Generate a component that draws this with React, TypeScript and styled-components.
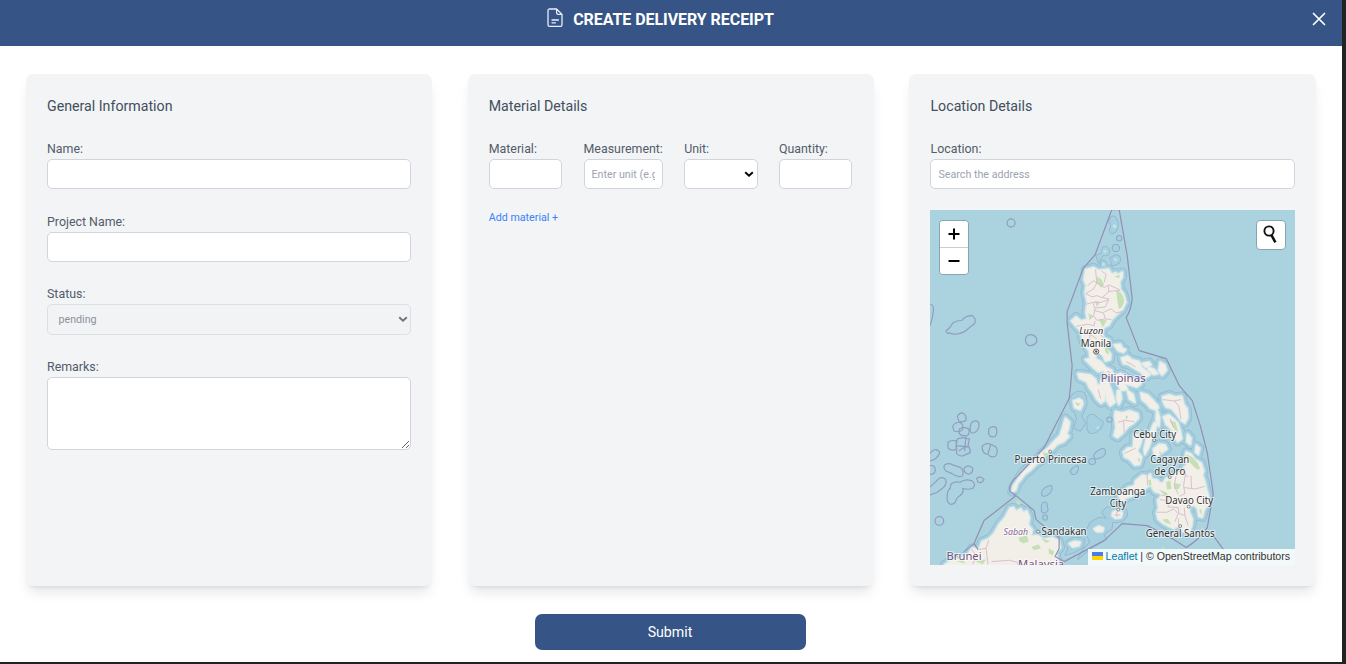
import React from "react";
import styled, { createGlobalStyle } from "styled-components";

const GlobalStyle = createGlobalStyle`
  * { box-sizing: border-box; }
  body { margin: 0; background: #232323; font-family: Roboto, "Liberation Sans", sans-serif; }
  input, textarea, select, button { font-family: inherit; }
`;

const Dialog = styled.div`
  width: 1342px;
  height: 662px;
  background: #fff;
  display: flex;
  flex-direction: column;
  overflow: hidden;
`;

const Header = styled.header`
  height: 46px;
  flex: none;
  display: flex;
  align-items: flex-start;
  justify-content: space-between;
  padding: 8px 15px 0 10px;
  background: #365486;
  color: #fff;
`;

const HeaderSide = styled.div`
  width: 0;
`;

const Title = styled.h1`
  margin: 0;
  display: flex;
  align-items: center;
  gap: 10px;
  height: 22px;
  font-size: 16px;
  font-weight: 700;
  letter-spacing: -0.06px;
  svg { position: relative; top: -1px; }
`;

const CloseButton = styled.button`
  width: 16px;
  height: 22px;
  padding: 0;
  border: 0;
  background: none;
  color: #fff;
  display: flex;
  align-items: center;
  justify-content: center;
`;

const Panels = styled.main`
  display: grid;
  grid-template-columns: repeat(3, 1fr);
  column-gap: 35.4px;
  padding: 28px 26.2px 0 26px;
  height: 540px;
`;

const Panel = styled.section`
  background: #f2f4f6;
  border-radius: 7px;
  padding: 21px;
  box-shadow: 0 9px 13px -3px rgba(0, 0, 0, 0.1), 0 4px 5px -4px rgba(0, 0, 0, 0.12);
  display: flex;
  flex-direction: column;
  min-width: 0;
`;

const PanelTitle = styled.h2`
  margin: 0 0 23px;
  font-size: 14.2px;
  line-height: 22px;
  font-weight: 400;
  color: #434e5c;
`;

const Field = styled.div<{ $gap?: number }>`
  display: flex;
  flex-direction: column;
  min-width: 0;
  margin-bottom: ${(p) => p.$gap ?? 23.2}px;
`;

const Label = styled.label`
  font-size: 12.4px;
  line-height: 18px;
  height: 19px;
  color: #535c6a;
  white-space: nowrap;
`;

const Input = styled.input`
  width: 100%;
  height: 30.4px;
  border: 1px solid #d1d5db;
  border-radius: 5px;
  background: #fff;
  padding: 0 7px;
  font-size: 10.7px;
  color: #374151;
  &::placeholder { color: #9ca3af; }
`;

const TextArea = styled.textarea`
  display: block;
  width: 100%;
  height: 73px;
  border: 1px solid #d1d5db;
  border-radius: 5px;
  background: #fff;
  padding: 7px;
  font-size: 10.7px;
`;

const SelectBox = styled.div<{ $muted?: boolean }>`
  height: 30.4px;
  border: 1px solid ${(p) => (p.$muted ? "#dcdfe3" : "#d1d5db")};
  border-radius: 5px;
  background: ${(p) => (p.$muted ? "#f2f3f5" : "#fff")};
  color: ${(p) => (p.$muted ? "#70747a" : "#000")};
  display: flex;
  align-items: center;
  justify-content: space-between;
  padding: 0 2.5px 0 10.5px;
  font-size: 10.7px;
`;

const SelectValue = styled.span`
  color: #8b919a;
`;

const MaterialRow = styled.div`
  display: grid;
  grid-template-columns: 73.5px 79.3px 73.5px 73.5px;
  column-gap: 21.3px;
`;

const AddLink = styled.a`
  font-size: 10.7px;
  line-height: 16px;
  color: #3b82f6;
`;

const MapFrame = styled.div`
  position: relative;
  height: 354.6px;
  flex: none;
  overflow: hidden;
  background: #aad3df;
`;

const MapDrawing = styled.svg`
  display: block;
  width: 100%;
  height: 100%;
`;

const ZoomControl = styled.div`
  position: absolute;
  left: 9px;
  top: 9.4px;
  width: 30px;
  border: 1.5px solid #87a5ae;
  border-radius: 4px;
  overflow: hidden;
`;

const ZoomButton = styled.div`
  height: 26.7px;
  background: #fff;
  display: flex;
  align-items: center;
  justify-content: center;
  & + & { border-top: 1px solid #ccc; }
`;

const SearchControl = styled.div`
  position: absolute;
  right: 9px;
  top: 9.4px;
  width: 30px;
  height: 30px;
  border: 1.5px solid #87a5ae;
  border-radius: 4px;
  background: #fff;
  display: flex;
  align-items: center;
  justify-content: center;
`;

const Attribution = styled.div`
  position: absolute;
  right: 0;
  bottom: 0;
  width: 207px;
  height: 16px;
  background: rgba(255, 255, 255, 0.85);
  display: flex;
  align-items: center;
  gap: 2.8px;
  padding: 0 0 1px 4px;
  font: 10.64px/15px "Liberation Sans", Arial, sans-serif;
  color: #333;
  white-space: nowrap;
  a { color: #0078a8; }
`;

const Footer = styled.footer`
  display: flex;
  justify-content: center;
  padding: 28px 2px 0 0;
`;

const SubmitButton = styled.button`
  width: 271px;
  height: 36px;
  border: 0;
  border-radius: 7px;
  background: #365486;
  color: #fff;
  font-size: 14.2px;
  padding-bottom: 2px;
`;

/* Geometry is kept per map tile; each tile has its own origin and is drawn at a third of its size. */
type Shape = { o: [number, number]; d: string };
const N: [number, number] = [1040, 206];
const W: [number, number] = [926, 386];
const C: [number, number] = [1040, 386];
const E: [number, number] = [1110, 386];

const land: Shape[] = [
  { o: N, d: "M137 192L160 186L175 195L205 191L214 206L228 202L230 210L246 200L246 214L238 228L240 252L250 265L257 290L246 312L226 330L214 342L206 358L190 366L186 384L190 396L206 404L196 426L212 446L210 462L196 466L188 448L170 438L164 460L150 456L148 436L134 418L126 396L122 376L108 362L94 346L108 334L122 346L142 342L138 320L142 290L135 262L139 240L132 222Z" },
  { o: N, d: "M136 462L160 456L184 470L196 486L214 494L218 505L196 502L190 494L174 498L160 486Z" },
  { o: N, d: "M244 458L262 452L274 462L296 468L304 486L318 496L330 506L318 514L300 498L280 486L264 476L250 474Z" },
  { o: N, d: "M360 470L374 478L378 494L366 508L356 496Z" },
  { o: N, d: "M114 504L150 508L166 522L176 560L164 566L148 546L140 528L118 518Z" },
  { o: N, d: "M222 418L240 416L246 428L256 432L250 440L234 434Z" },
  { o: N, d: "M186 518L204 530L214 556L224 590L210 600L200 586L196 556L180 540Z" },
  { o: N, d: "M226 510L242 504L262 520L284 524L302 534L290 544L272 538L252 534L262 552L244 554L232 536Z" },
  { o: N, d: "M262 556L278 566L284 590L268 580Z" },
  { o: N, d: "M306 474L326 470L332 478L316 484ZM322 484L342 492L352 504L340 506L326 494Z" },
  { o: C, d: "M158 -2L190 0L196 20L192 46L182 52L170 40L160 22Z" },
  { o: C, d: "M104 46L116 40L126 46L122 60L108 64Z" },
  { o: C, d: "M232 16L240 14L243 40L236 56L230 40Z" },
  { o: C, d: "M224 92L226 78L246 82L268 76L292 84L294 98L280 112L262 124L250 140L232 156L222 150L228 126Z" },
  { o: C, d: "M304 24L318 30L334 44L352 60L346 72L330 66L316 48Z" },
  { o: C, d: "M282 148L300 146L304 162L298 182L290 196L304 214L298 236L284 238L268 220L254 214L250 200L262 188L280 186Z" },
  { o: C, d: "M350 114L344 136L334 158L326 184L314 206L312 190L318 164L332 136L342 112Z" },
  { o: C, d: "M340 190L358 176L374 178L380 190L366 200L352 210L342 202Z" },
  { o: C, d: "M350 72L358 96L356 122L348 106Z" },
  { o: E, d: "M92 22L112 28L128 44L144 66L136 72L112 54L96 42Z" },
  { o: E, d: "M158 34L176 28L196 34L214 32L220 56L230 70L232 96L224 112L214 106L198 84L184 68L168 64L160 50Z" },
  { o: E, d: "M160 94L176 88L190 100L202 112L210 136L214 160L202 168L192 152L186 132L168 116Z" },
  { o: E, d: "M232 146L242 158L240 176L230 168Z" },
  { o: E, d: "M258 180L268 188L264 206L256 200Z" },
  { o: C, d: "M236 330L250 318L264 306L284 300L286 286L306 270L322 272L330 266L334 280L352 284L358 294L344 302L326 300L308 314L284 318L274 332L258 336L246 348Z" },
  { o: C, d: "M218 380L232 374L246 382L242 396L226 398L216 390Z" },
  { o: E, d: "M126 306L140 290L158 294L168 278L184 274L198 262L218 262L222 244L232 236L226 214L228 200L242 206L254 222L272 232L280 256L276 268L284 290L288 310L294 330L292 356L282 372L276 394L266 392L262 368L252 358L238 362L236 378L246 400L244 420L236 438L220 438L206 420L190 428L172 420L158 412L144 400L140 382L146 366L142 344L154 332L150 322L134 318Z" },
  { o: W, d: "M418 98L430 110L426 132L420 144L428 152L412 168L392 176L376 194L356 208L350 222L330 236L312 254L296 266L284 282L274 294L268 314L258 318L262 302L274 284L290 260L310 242L330 224L346 204L366 188L386 166L402 150L410 126Z" },
  { o: W, d: "M442 46L456 42L470 54L462 72L446 66Z" },
  { o: W, d: "M56 538L76 524L98 522L126 508L138 488L160 490L168 468L188 460L204 444L220 416L236 398L252 368L262 366L270 378L284 370L292 382L302 376L310 396L306 418L318 432L314 452L334 450L354 462L378 456L398 466L402 486L390 500L392 520L404 540Z" },
  { o: W, d: "M430 474L444 468L462 470L458 480L440 484Z" },
  { o: W, d: "M504 430L518 422L532 428L528 438L512 438Z" },
];

const shoals: Shape[] = [
  { o: N, d: "M212 36Q224 26 230 44Q240 58 226 78Q210 90 208 74Q218 58 206 48Z" },
  { o: N, d: "M188 126Q206 120 208 138Q206 154 190 148L180 162L176 172L168 150L184 144Z" },
  { o: N, d: "M210 158L226 148Q242 150 240 166Q230 180 216 178Z" },
  { o: N, d: "M182 168Q194 160 200 176Q196 190 182 184Z" },
  { o: W, d: "M434 34Q452 10 474 22Q488 44 474 74L466 92L478 112L462 136L444 128L452 100Z" },
  { o: W, d: "M484 96Q498 78 512 96L530 108Q530 128 512 138Q492 150 484 132Z" },
  { o: W, d: "M456 520L472 490L492 470L478 440L494 410L520 396L560 404L556 430L530 446L540 460L498 484Z" },
  { o: W, d: "M418 508L434 470Q450 450 476 462L466 486L444 500Z" },
  { o: C, d: "M186 380L200 366L230 364L258 372L262 390L246 404L218 410L198 398Z" },
];

const islets: Shape[] = [
  { o: N, d: "M218 62a5 5 0 1 0 10 0a5 5 0 1 0 -10 0M190 138a4 4 0 1 0 8 0a4 4 0 1 0 -8 0M222 162a4 4 0 1 0 8 0a4 4 0 1 0 -8 0M186 176a4 4 0 1 0 8 0a4 4 0 1 0 -8 0" },
  { o: C, d: "M170 126a3 3 0 1 0 6 0a3 3 0 1 0 -6 0M262 34a8 8 0 1 0 16 0a8 8 0 1 0 -16 0" },
];

const blobs: Shape[] = [
  { o: [926, 206], d: "M60 376Q74 366 80 352Q94 344 108 344Q118 330 138 330Q152 340 146 354L128 368Q114 382 98 384Q82 388 72 382Q62 386 60 376Z" },
  { o: [926, 206], d: "M12 296Q24 296 22 316Q20 340 12 360" },
  { o: [926, 206], d: "M243 52A12 12 0 1 0 267 52A12 12 0 1 0 243 52M300 394Q306 384 318 388Q334 392 332 408Q324 422 308 420Q294 412 300 394Z" },
  { o: W, d: "M94 94Q98 82 110 82Q122 88 120 104Q110 112 98 106ZM80 122Q86 110 100 110Q114 116 110 132Q98 142 84 136ZM136 112Q144 102 156 108Q162 118 156 130Q148 144 136 142Q128 130 136 112ZM100 130Q114 122 128 130Q132 144 124 150Q106 152 100 144ZM66 170Q74 162 90 166L92 190Q78 198 66 188ZM94 160L110 156L130 160L126 180Q134 190 132 202L116 208Q104 216 92 204L90 180ZM104 150L120 150L116 196M92 180L128 184M98 196L120 182" },
  { o: W, d: "M188 130Q198 118 210 126Q216 140 208 152Q194 158 188 146ZM168 182Q178 170 194 176L210 184Q218 200 208 212Q194 218 186 206Q168 206 168 182ZM194 178L186 204" },
  { o: W, d: "M12 204Q26 184 40 198Q42 210 24 222L12 226M12 240Q28 238 28 254Q26 268 12 266M56 238Q68 230 80 238L104 246Q116 258 108 272Q92 276 78 264L60 256Q50 248 56 238ZM114 248Q126 234 140 248Q142 262 128 266Q112 262 114 248ZM152 278Q164 270 174 282Q168 294 156 290ZM12 304Q22 296 32 286Q42 270 58 280Q64 292 54 304L34 320L12 328M66 316Q76 306 74 296Q86 286 102 290Q118 278 138 286Q152 296 140 308Q126 314 110 308Q114 322 102 330Q90 338 88 350Q72 364 64 346Q62 328 66 316ZM27 406A13 13 0 1 0 53 406A13 13 0 1 0 27 406" },
];

const banks: Shape[] = [
  { o: W, d: "M348 314Q362 300 376 300Q382 312 370 324Q356 338 346 328ZM346 358Q352 344 362 352L366 374Q358 388 346 378ZM432 258Q440 242 454 240Q462 250 450 264Q436 272 432 258ZM502 210Q510 194 530 188Q544 194 534 210Q518 222 506 220ZM488 228A10 9 0 1 0 508 228A10 9 0 1 0 488 228M350 396A6 7 0 1 0 364 396A6 7 0 1 0 350 396M542 102A8 8 0 1 0 558 102A8 8 0 1 0 542 102" },
  { o: N, d: "M229 98A8 8 0 1 0 245 98A8 8 0 1 0 229 98M216 127A11 11 0 1 0 238 127A11 11 0 1 0 216 127" },
];

const parks: Shape[] = [
  { o: N, d: "M228 254Q248 258 252 284Q250 304 236 310L232 290ZM170 212L184 222L192 238L182 246L172 232ZM222 212L240 208L236 218ZM164 286L180 290L170 304ZM144 322L160 332L148 340ZM176 342L200 344L188 364ZM190 410L204 430L206 448L196 440Z" },
  { o: E, d: "M178 104L196 110L204 140L194 134ZM228 206L246 214L262 232L270 250L260 252L246 238L232 224ZM168 290L180 284L184 310L170 312ZM192 292L212 296L206 310L192 310ZM146 312L168 320L182 340L164 330ZM114 284L122 282L124 300L116 300ZM266 374L274 370L274 388ZM156 402L172 400L184 416L168 412ZM146 196L154 200L150 208Z" },
  { o: W, d: "M446 50L464 54L454 62ZM350 200L370 204L356 216ZM270 344L284 346L280 360L272 354ZM278 456L302 450L308 468L292 474L280 466ZM316 484L338 476L344 488L324 494ZM344 458L372 466L360 472ZM368 488L384 498L380 510L368 504ZM146 526L180 522L170 536ZM92 528L110 524L118 534Z" },
  { o: C, d: "M256 90L264 92L258 104ZM292 216L300 222L296 232ZM364 484L374 486L370 500Z" },
];

const borders: Shape[] = [
  { o: N, d: "M166 192L170 232L192 246L206 238L238 252M142 240L160 226L172 232M136 264L156 274L170 270L186 276L206 258L204 240M206 258L240 254M170 232L160 250L136 264M138 296L158 290L164 308L196 304L206 280L186 276M158 290L184 290L206 282M166 308L160 330L148 342M160 314L190 322L196 340L170 344L160 330M190 320L212 310L228 322L246 318M196 340L214 342M108 362L142 356L162 360L164 346M126 382L150 386L170 400M150 386L148 406M164 440L182 450M190 396L178 384M184 196L198 206L192 230M258 468L274 476L286 484M200 498L212 500" },
  { o: E, d: "M158 42L192 46L212 42M192 46L206 62L212 100M180 100L190 126M222 248L226 262L220 300L224 324L208 332M222 306L256 310L284 302M244 310L242 270M198 270L192 300L204 326M140 380L170 380L190 370L204 384L194 408M172 330L174 364L204 366L206 384L224 390L222 366M224 390L234 420M150 342L174 346M218 262L234 274M206 420L204 398M172 332L152 328M110 256L112 300M42 204L76 188M24 110L44 104L72 108M40 106L42 142" },
  { o: W, d: "M136 490L150 510L140 536M188 464L180 488L186 536M180 488L158 492M196 528L250 524L274 530L276 540M516 12L524 40M222 390L226 388" },
  { o: C, d: "M230 378L230 394M222 388L240 388" },
];

const territorial =
  "M1111.7 210L1095 255L1083 269L1067 312L1067 323L1072 366L1070.5 386L1069 399L1044 448L1018 476Q1008 484 1010 492L1016 496L1034 511L1036 520L1048 530L1059 538L1059 549L1055 557L1064 562L1104 541L1122 524L1147 526L1172 539L1186 548Q1200 539 1207 528L1213 494L1207 453L1200 426L1192 401L1179 386L1166 359L1139 351L1126 318Q1131 310 1132 299L1127 256L1119 210M1111.7 210L1119 210M1016 496L984 521L974 544L964 552M1213 536L1224 551M974 544L978 550";

const Layer = ({ shapes, ...rest }: { shapes: Shape[] } & React.SVGProps<SVGGElement>) => (
  <g strokeLinejoin="round" {...rest}>
    {shapes.map((s, i) => (
      <path key={i} d={s.d} transform={`translate(${s.o[0]} ${s.o[1]}) scale(.33333)`} />
    ))}
  </g>
);

const MapLabel = styled.text<{ $tone?: string; $size?: number; $italic?: boolean }>`
  font-family: "Noto Sans", sans-serif;
  font-size: ${(p) => p.$size ?? 9.9}px;
  font-style: ${(p) => (p.$italic ? "italic" : "normal")};
  fill: ${(p) => p.$tone ?? "#333"};
  stroke: rgba(255, 255, 255, 0.6);
  stroke-width: 2.2px;
  stroke-linejoin: round;
  paint-order: stroke;
`;

const towns = [
  [1050, 452], [1154, 440.5], [1169.5, 477.5], [1188.5, 507], [1118, 510], [1038, 532], [1180, 526.5],
];

type Place = { t: string; x: number; y: number; w: number; tone?: string; size?: number; italic?: boolean };
const places: Place[] = [
  { t: "Luzon", x: 1079, y: 334.5, w: 24, italic: true, size: 9.2 },
  { t: "Manila", x: 1080.5, y: 347.5, w: 30.5 },
  { t: "Pilipinas", x: 1100.5, y: 382.5, w: 45, tone: "#71557f", size: 10.5 },
  { t: "Cebu City", x: 1133, y: 438, w: 43 },
  { t: "Cagayan", x: 1150, y: 463, w: 39 },
  { t: "de Oro", x: 1154, y: 475, w: 31 },
  { t: "Puerto Princesa", x: 1014.5, y: 463, w: 72 },
  { t: "Zamboanga", x: 1090, y: 495, w: 55 },
  { t: "City", x: 1109.5, y: 507, w: 16.5 },
  { t: "Davao City", x: 1165, y: 504, w: 48 },
  { t: "General Santos", x: 1145.5, y: 537.5, w: 69 },
  { t: "Sandakan", x: 1041.5, y: 535.5, w: 45 },
  { t: "Sabah", x: 1003.5, y: 535.5, w: 24.5, tone: "#8a6e98", italic: true, size: 9.2 },
  { t: "Brunei", x: 946.5, y: 560.5, w: 35, tone: "#71557f", size: 10.5 },
  { t: "Malaysia", x: 1018, y: 568, w: 46, tone: "#71557f", size: 10.5 },
];

const PhilippinesMap = () => (
  <MapDrawing viewBox="930 210.4 364 354.6" preserveAspectRatio="none">
    <rect x="930" y="210" width="364" height="355" fill="#aad3df" />
    <Layer shapes={land} fill="#93b5cd" stroke="#93b5cd" strokeWidth={28} />
    <Layer shapes={shoals} fill="#93b5cd" stroke="#93b5cd" strokeWidth={5} />
    <Layer shapes={land} fill="#a4cfde" stroke="#a4cfde" strokeWidth={24} />
    <Layer shapes={shoals} fill="#a6d0df" />
    <Layer shapes={land} fill="none" stroke="#a0cbdd" strokeWidth={17} />
    <Layer shapes={land} fill="none" stroke="#b9dce5" strokeWidth={12} />
    <Layer shapes={islets} fill="#cfe3e4" stroke="#b9dbe5" strokeWidth={3} />
    <Layer shapes={land} fill="#f2eee8" stroke="#e2ebea" strokeWidth={6} />
    <Layer shapes={land} fill="#f2eee8" />
    <Layer shapes={parks} fill="#c5e0b4" />
    <Layer shapes={borders} fill="none" stroke="#d3bacb" strokeWidth={2.6} />
    <Layer shapes={banks} fill="#a6d0df" stroke="#8fa9c8" strokeWidth={3} />
    <Layer shapes={blobs} fill="none" stroke="#939dbf" strokeWidth={3.6} />
    <path d={territorial} fill="none" stroke="#928fb4" strokeWidth="1.2" strokeLinejoin="round" />
    {towns.map(([x, y]) => (
      <circle key={x} cx={x} cy={y} r="1.5" fill="#eee" stroke="#666" strokeWidth=".7" />
    ))}
    <circle cx="1096" cy="352" r="2.6" fill="#e6e2dc" stroke="#444" strokeWidth=".8" />
    <circle cx="1096" cy="352" r="1.1" fill="#444" />
    {places.map((p) => (
      <MapLabel
        key={p.t}
        x={p.x}
        y={p.y}
        textLength={p.w}
        lengthAdjust="spacingAndGlyphs"
        $tone={p.tone}
        $size={p.size}
        $italic={p.italic}
      >
        {p.t}
      </MapLabel>
    ))}
  </MapDrawing>
);

const Chevron = () => (
  <svg width="10" height="8" viewBox="0 0 10 8" fill="none" stroke="currentColor" strokeWidth="1.9">
    <path d="M1.2 2.2L5 5.8L8.8 2.2" />
  </svg>
);

const DocumentIcon = () => (
  <svg width="16" height="20" viewBox="0 0 16 20" fill="none" stroke="#e8eefa" strokeWidth="1.3" strokeLinejoin="round" strokeLinecap="round">
    <path d="M9.6 1H2.6Q1 1 1 2.6V16.8Q1 18.4 2.6 18.4H13.4Q15 18.4 15 16.8V6.4L9.6 1V4.8Q9.6 6.4 11.2 6.4H15" />
    <path d="M5 12H11.4M5 14.8H8.4" />
  </svg>
);

const TextField = ({ label, placeholder, gap }: { label: string; placeholder?: string; gap?: number }) => (
  <Field $gap={gap}>
    <Label>{label}</Label>
    <Input placeholder={placeholder} />
  </Field>
);

export default function App() {
  return (
    <>
      <GlobalStyle />
      <Dialog>
        <Header>
          <HeaderSide />
          <Title>
            <DocumentIcon />
            CREATE DELIVERY RECEIPT
          </Title>
          <CloseButton aria-label="Close">
            <svg width="14" height="14" viewBox="0 0 14 14" stroke="#fff" strokeWidth="1.7" strokeLinecap="round">
              <path d="M1.5 1.5L12.5 12.5M12.5 1.5L1.5 12.5" />
            </svg>
          </CloseButton>
        </Header>
        <Panels>
          <Panel>
            <PanelTitle>General Information</PanelTitle>
            <TextField label="Name:" />
            <TextField label="Project Name:" />
            <Field>
              <Label>Status:</Label>
              <SelectBox $muted>
                <SelectValue>pending</SelectValue>
                <Chevron />
              </SelectBox>
            </Field>
            <Field $gap={0}>
              <Label>Remarks:</Label>
              <TextArea />
            </Field>
          </Panel>
          <Panel>
            <PanelTitle>Material Details</PanelTitle>
            <MaterialRow>
              <TextField label="Material:" gap={20.6} />
              <TextField label="Measurement:" placeholder="Enter unit (e.g., kg)" gap={20.6} />
              <Field $gap={20.6}>
                <Label>Unit:</Label>
                <SelectBox>
                  <span />
                  <Chevron />
                </SelectBox>
              </Field>
              <TextField label="Quantity:" gap={20.6} />
            </MaterialRow>
            <AddLink>Add material +</AddLink>
          </Panel>
          <Panel>
            <PanelTitle>Location Details</PanelTitle>
            <TextField label="Location:" placeholder="Search the address" gap={21} />
            <MapFrame>
              <PhilippinesMap />
              <ZoomControl>
                <ZoomButton>
                  <svg width="12" height="12" viewBox="0 0 12 12" stroke="#000" strokeWidth="2">
                    <path d="M.5 6H11.5M6 .5V11.5" />
                  </svg>
                </ZoomButton>
                <ZoomButton>
                  <svg width="12" height="12" viewBox="0 0 12 12" stroke="#000" strokeWidth="2">
                    <path d="M.5 6H11.5" />
                  </svg>
                </ZoomButton>
              </ZoomControl>
              <SearchControl>
                <svg width="15" height="19" viewBox="0 0 15 19" fill="none" stroke="#111">
                  <circle cx="6" cy="6" r="4.6" strokeWidth="1.9" />
                  <path d="M8.4 10L12.4 17.4" strokeWidth="2.6" />
                </svg>
              </SearchControl>
              <Attribution>
                <svg width="11" height="8" viewBox="0 0 11 8">
                  <rect width="11" height="4" fill="#4c7be1" />
                  <rect y="4" width="11" height="4" fill="#ffd500" />
                </svg>
                <a>Leaflet</a>
                <span>|</span>
                <span>© OpenStreetMap contributors</span>
              </Attribution>
            </MapFrame>
          </Panel>
        </Panels>
        <Footer>
          <SubmitButton>Submit</SubmitButton>
        </Footer>
      </Dialog>
    </>
  );
}
